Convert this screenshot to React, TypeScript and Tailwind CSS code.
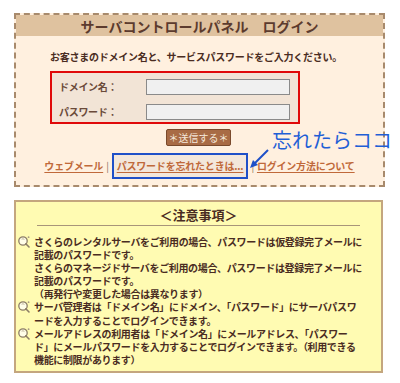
import React from 'react';

const NOTES: string[][] = [
  [
    'さくらのレンタルサーバをご利用の場合、パスワードは仮登録完了メールに',
    '記載のパスワードです。',
    'さくらのマネージドサーバをご利用の場合、パスワードは登録完了メールに',
    '記載のパスワードです。',
    '（再発行や変更した場合は異なります）',
  ],
  [
    'サーバ管理者は「ドメイン名」にドメイン、「パスワード」にサーバパスワ',
    'ードを入力することでログインできます。',
  ],
  [
    'メールアドレスの利用者は「ドメイン名」にメールアドレス、「パスワー',
    'ド」にメールパスワードを入力することでログインできます。（利用できる',
    '機能に制限があります）',
  ],
];

function HintIcon() {
  return (
    <svg width="14" height="13" viewBox="0 0 14 13" className="shrink-0">
      <circle cx="6" cy="6" r="4.2" fill="#fffde8" stroke="#8c7d66" strokeWidth="1.3" />
      <path d="M8.8 8.8 L12 12" stroke="#8c7d66" strokeWidth="1.6" strokeLinecap="round" />
      <path d="M4.6 4.2 Q6 3.2 7.4 4.4" stroke="#b8ab94" strokeWidth="0.9" fill="none" />
      <circle cx="11.6" cy="2.2" r="0.9" fill="#a89a82" />
    </svg>
  );
}

export default function App() {
  return (
    <div className="w-[400px] h-[383px] bg-white overflow-hidden pt-[13px] pl-[14px] font-['Noto_Sans_CJK_JP',sans-serif]">
      {/* ログインパネル */}
      <div className="relative w-[371px] border-2 border-dashed border-[#a88a6c] bg-[#fff0df]">
        <div className="h-[21px] bg-[#dfc29f] flex items-center justify-center text-[14px] font-bold leading-none text-[#5c3b2e]">
          サーバコントロールパネル　ログイン
        </div>

        <p className="mt-[14px] h-[14px] pl-[34px] text-[10px] tracking-[-0.25px] leading-[14px] font-bold text-[#4a2c22] whitespace-nowrap">
          お客さまのドメイン名と、サービスパスワードをご入力ください。
        </p>

        <div className="mt-[7px] ml-[34px] w-[250px] h-[53px] border-2 border-[#e00a0a] bg-[#f2e4d6] pt-[6px] pl-[7px] flex flex-col gap-[9px]">
          {['ドメイン名：', 'パスワード：'].map((label) => (
            <div key={label} className="flex items-center h-[16px]">
              <span className="w-[87px] text-[10px] tracking-[-0.3px] font-bold leading-none text-[#6a4a3a]">{label}</span>
              <input
                type="text"
                className="w-[144px] h-[16px] bg-[#f0f0f0] border border-[#8a8a8a] outline-none"
              />
            </div>
          ))}
        </div>

        <div className="mt-[5px] flex justify-center">
          <button className="w-[65px] h-[17px] ml-[-2px] rounded-[2px] border border-[#7a4a2c] bg-[#a86b45] text-[10px] leading-none text-[#f6e9dc] flex items-center justify-center">
            ＊送信する＊
          </button>
        </div>

        <div className="mt-[7px] mb-[6px] flex items-center justify-center text-[10px] tracking-[-0.2px] font-bold leading-none text-[#c0693a]">
          <a className="underline underline-offset-2">ウェブメール</a>
          <span className="mx-[3px] text-[#8a7060] font-normal">|</span>
          <span className="h-[26px] px-[3px] border-2 border-[#1f50c8] bg-[#f3e7db] flex items-center">
            <a className="underline underline-offset-2">パスワードを忘れたときは...</a>
          </span>
          <span className="mx-[3px] text-[#8a7060] font-normal">|</span>
          <a className="underline underline-offset-2">ログイン方法について</a>
        </div>

        {/* 注釈 */}
        <span className="absolute left-[256px] top-[115px] text-[20px] leading-none text-[#1f5fd6] whitespace-nowrap">
          忘れたらココ
        </span>
        <svg className="absolute left-[232px] top-[133px]" width="24" height="24" viewBox="0 0 24 24">
          <path d="M20 2 L5 17" stroke="#1f50c8" strokeWidth="2" />
          <path d="M2 20 L5 12 L10 17 Z" fill="#1f50c8" />
        </svg>
      </div>

      {/* 注意事項 */}
      <div className="mt-[13px] w-[369px] h-[173px] border-2 border-[#c4a67e] bg-[#fffbb2] pt-[6px]">
        <h2 className="h-[14px] text-center text-[13px] font-bold leading-[14px] text-[#4a2c22]">＜注意事項＞</h2>
        <div className="mt-[3px] mx-auto w-[323px] h-px bg-[#a8957a]" />
        <div className="mt-[9px] flex flex-col">
          {NOTES.map((lines, i) => (
            <div key={i} className="flex pl-[1px]">
              <div className="w-[17px] shrink-0">
                <HintIcon />
              </div>
              <div className="text-[10px] tracking-[-0.35px] font-bold leading-[13.1px] text-[#4a2c22] whitespace-nowrap">
                {lines.map((l) => (
                  <div key={l}>{l}</div>
                ))}
              </div>
            </div>
          ))}
        </div>
      </div>
    </div>
  );
}
